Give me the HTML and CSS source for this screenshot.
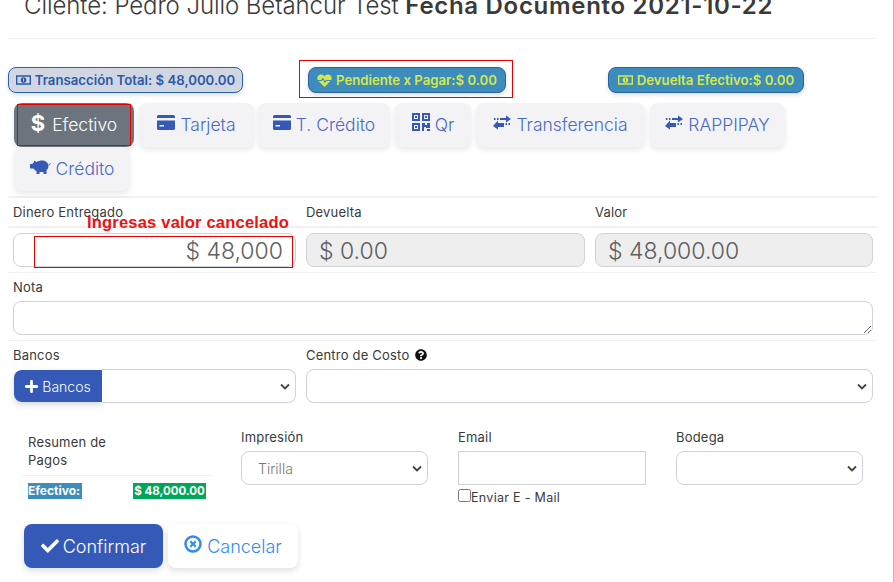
FILE: index.html
```html
<!DOCTYPE html>
<html lang="es">
<head>
<meta charset="utf-8">
<title>Pago</title>
<link rel="stylesheet" href="styles.css">
</head>
<body>
<div class="modal">
  <h4 class="title">Cliente: Pedro Julio Betancur Test <b>Fecha Documento 2021-10-22</b></h4>
  <hr class="rule rule-title">
  <div class="badges">
    <span class="badge badge-light">
      <svg class="ic-money" viewBox="0 0 16 12"><path fill="currentColor" fill-rule="evenodd" d="M0 1h16v10H0zM1.500 2.500v7h13v-7zM8 3a3 3 0 1 1 0 6 3 3 0 0 1 0-6z"/><path fill="#d1d7e2" d="M7.500 4.500h1v3h-1z"/></svg>
      Transacción Total: $ 48,000.00</span>
    <span class="badge badge-blue b2">
      <svg class="ic-heart" viewBox="0 0 16 14"><path fill="currentColor" d="M8 14 1.500 7.500C-.8 5 .3 1 3.800 .6 5.500 .4 7 1.200 8 2.500 9 1.200 10.500 .4 12.200 .6 15.700 1 16.800 5 14.500 7.500z"/><path fill="none" stroke="#3c8dbc" stroke-width="1.100" d="M0 7h5l1.200-2.200L8.500 9l1.300-2H16"/></svg>
      Pendiente x Pagar:$ 0.00</span>
    <span class="badge badge-blue b3">
      <svg class="ic-money" viewBox="0 0 16 12"><path fill="currentColor" fill-rule="evenodd" d="M0 1h16v10H0zM1.500 2.500v7h13v-7zM8 3a3 3 0 1 1 0 6 3 3 0 0 1 0-6z"/><path fill="#3c8dbc" d="M7.500 4.500h1v3h-1z"/></svg>
      Devuelta Efectivo:$ 0.00</span>
  </div>
  <div class="tabs">
    <a class="tab tab-active t1"><span class="dollar">$</span> Efectivo</a>
    <a class="tab t2"><svg class="ic" viewBox="0 0 18 15"><path fill="currentColor" d="M1.500 0h15A1.500 1.500 0 0 1 18 1.500V3H0V1.500A1.500 1.500 0 0 1 1.500 0zM0 5.500h18v8a1.500 1.500 0 0 1-1.500 1.500h-15A1.500 1.500 0 0 1 0 13.500zM2.500 10v1.500H7V10z"/></svg>Tarjeta</a>
    <a class="tab t3"><svg class="ic" viewBox="0 0 18 15"><path fill="currentColor" d="M1.500 0h15A1.500 1.500 0 0 1 18 1.500V3H0V1.500A1.500 1.500 0 0 1 1.500 0zM0 5.500h18v8a1.500 1.500 0 0 1-1.500 1.500h-15A1.500 1.500 0 0 1 0 13.500zM2.500 10v1.500H7V10z"/></svg>T. Crédito</a>
    <a class="tab t4"><svg class="ic ic-qr" viewBox="0 0 18 18"><path fill="currentColor" fill-rule="evenodd" d="M0 0h8v8H0zM2 2v4h4V2zM10 0h8v8h-8zM12 2v4h4V2zM0 10h8v8H0zM2 12v4h4v-4zM3 3h2v2H3zM13 3h2v2h-2zM3 13h2v2H3zM10 10h3v2h2v-2h3v5h-4v-1h-2v4h-2zM15 16h3v2h-3z"/></svg>Qr</a>
    <a class="tab t5"><svg class="ic" viewBox="0 0 18 14"><path fill="currentColor" d="M1 2.500h1.500v2H1zM4 2.500h1.500v2H4zM7 2.500h6V0l5 3.500L13 7V4.500H7zM17 7.500h-1.500v2H17zM14 7.500h-1.500v2H14zM11 7.500H5V5L0 10.500 5 14v-2.500h6z"/></svg>Transferencia</a>
    <a class="tab t6"><svg class="ic" viewBox="0 0 18 14"><path fill="currentColor" d="M1 2.500h1.500v2H1zM4 2.500h1.500v2H4zM7 2.500h6V0l5 3.500L13 7V4.500H7zM17 7.500h-1.500v2H17zM14 7.500h-1.500v2H14zM11 7.500H5V5L0 10.500 5 14v-2.500h6z"/></svg>RAPPIPAY</a>
    <a class="tab t7"><svg class="ic ic-pig" viewBox="0 0 21 15"><path fill="currentColor" d="M4 1.500 6.500 3C8 2 10 1.500 12 1.500c4 0 6.500 2.500 6.500 5.500 0 1.800-.8 3.200-2 4.300V15h-3v-2h-4v2h-3v-3C4.800 11.300 4 10.300 3.500 9.500H0V5h2.300C2.800 4.200 3.500 3.500 4 3.200z"/><path fill="none" stroke="currentColor" stroke-width="1" d="M18.500 6c1 0 1.800-.7 1.800-1.800"/></svg>Crédito</a>
  </div>
  <hr class="rule rule-tabs">
  <div class="grid3 labels">
    <label class="lbl">Dinero Entregado</label>
    <label class="lbl">Devuelta</label>
    <label class="lbl">Valor</label>
  </div>
  <hr class="rule rule-labels">
  <div class="grid3 amounts">
    <input class="field amount" value="$ 48,000">
    <input class="field amount left" value="$ 0.00" disabled>
    <input class="field amount left" value="$ 48,000.00" disabled>
  </div>
  <hr class="rule rule-amounts">
  <div class="nota">
    <label class="lbl">Nota</label>
    <textarea class="field area"></textarea>
  </div>
  <hr class="rule rule-nota">
  <div class="bank-row">
    <div class="bank-col">
      <label class="lbl">Bancos</label>
      <div class="group">
        <a class="bank-btn"><svg class="ic-plus" viewBox="0 0 448 512"><path fill="currentColor" d="M416 208H272V64c0-17.670-14.330-32-32-32h-32c-17.670 0-32 14.330-32 32v144H32c-17.670 0-32 14.330-32 32v32c0 17.670 14.330 32 32 32h144v144c0 17.670 14.330 32 32 32h32c17.670 0 32-14.330 32-32V304h144c17.670 0 32-14.330 32-32v-32c0-17.670-14.330-32-32-32z"/></svg>Bancos</a>
        <select class="field sel sel-group"></select>
      </div>
    </div>
    <div class="cost-col">
      <label class="lbl">Centro de Costo <svg class="ic-q" viewBox="0 0 512 512"><path fill="currentColor" d="M504 256c0 136.997-111.043 248-248 248S8 392.997 8 256C8 119.083 119.043 8 256 8s248 111.083 248 248zM262.655 90c-54.497 0-89.255 22.957-116.549 63.758-3.536 5.286-2.353 12.415 2.715 16.258l34.699 26.310c5.205 3.947 12.621 3.008 16.665-2.122 17.864-22.658 30.113-35.797 57.303-35.797 20.429 0 45.698 13.148 45.698 32.958 0 14.976-12.363 22.667-32.534 33.976C247.128 238.528 216 254.941 216 296v4c0 6.627 5.373 12 12 12h56c6.627 0 12-5.373 12-12v-1.333c0-28.462 83.186-29.647 83.186-106.667 0-58.002-60.165-102-116.531-102zM256 338c-25.365 0-46 20.635-46 46 0 25.364 20.635 46 46 46s46-20.636 46-46c0-25.365-20.635-46-46-46z"/></svg></label>
      <select class="field sel"></select>
    </div>
  </div>
  <div class="bottom-row">
    <div class="summary">
      <div class="sum-head">Resumen de<br>Pagos</div>
      <div class="sum-row"><span class="sum-k">Efectivo:</span><span class="sum-v">$ 48,000.00</span></div>
    </div>
    <div class="col-print">
      <label class="lbl">Impresión</label>
      <select class="field sel sel-print"><option>Tirilla</option></select>
    </div>
    <div class="col-mail">
      <label class="lbl">Email</label>
      <input class="field mail">
      <label class="check"><input type="checkbox" class="chk"><span class="check-text">Enviar E - Mail</span></label>
    </div>
    <div class="col-store">
      <label class="lbl">Bodega</label>
      <select class="field sel"></select>
    </div>
  </div>
  <div class="actions">
    <a class="btn btn-ok"><svg class="ic-check" viewBox="0 0 512 512"><path fill="currentColor" d="M173.898 439.404l-166.400-166.400c-9.997-9.997-9.997-26.206 0-36.204l36.203-36.204c9.997-9.998 26.207-9.998 36.204 0L192 312.690 432.095 72.596c9.997-9.997 26.207-9.997 36.204 0l36.203 36.204c9.997 9.997 9.997 26.206 0 36.204l-294.400 294.401c-9.998 9.997-26.207 9.997-36.204-.001z"/></svg>Confirmar</a>
    <a class="btn btn-cancel"><svg class="ic-x" viewBox="0 0 18 18"><circle cx="9" cy="9" r="7.500" fill="none" stroke="currentColor" stroke-width="2.500"/><path fill="none" stroke="currentColor" stroke-width="2.200" d="M6.300 6.300l5.400 5.400M11.700 6.300l-5.400 5.400"/></svg>Cancelar</a>
  </div>
  <div class="mark mark-1"></div>
  <div class="mark mark-2"></div>
  <div class="mark mark-3"></div>
  <div class="note-red">Ingresas valor cancelado</div>
</div>
</body>
</html>
```
FILE: styles.css
```css
* { box-sizing: border-box; }
html, body { margin: 0; padding: 0; background: #fff; height: 100%; overflow: hidden; }
body { font-family: "Inter", "Noto Sans", sans-serif; color: #3a3a3a; }
.modal { position: relative; width: 894px; height: 582px; overflow: hidden; border-right: 1px solid #b9b9b9; }
.title { margin: -9px 0 0 24px; font-size: 24px; line-height: 30px; font-weight: 300; color: #3a3a3a; white-space: nowrap; letter-spacing: -.08px; }
.title b { font-weight: 600; letter-spacing: .7px; }
.rule { border: 0; height: 1px; background: #f1f1f3; margin: 0 16px 0 8px; }
.rule-title { margin-top: 17px; }
.badges { display: flex; margin: 28px 0 0 8px; height: 26px; }
.badge { display: flex; align-items: center; justify-content: center; gap: 4px; height: 26px; border-radius: 8px; font-size: 13.200px; font-weight: 600; white-space: nowrap; box-shadow: 0 2px 4px rgba(60,70,90,.18); border: 1px solid #2a62a8; }
.badge-light { width: 235px; background: #d1d7e2; color: #2c5aa8; }
.badge-blue { background: #3c8dbc; color: #d4e84a; }
.b2 { width: 198px; margin-left: 65px; }
.b3 { width: 196px; margin-left: 102px; }
.ic-money { width: 15px; height: 12px; }
.ic-heart { width: 15px; height: 13px; }
.tabs { display: flex; flex-wrap: wrap; margin: 10px 0 0 14px; width: 790px; column-gap: 5px; }
.tab { display: flex; align-items: center; justify-content: center; gap: 5px; height: 44px; padding-bottom: 2px; border-radius: 8px; background: #f3f3f5; color: #4a6bc4; font-size: 17.500px; font-weight: 300; white-space: nowrap; box-shadow: 0 3px 5px rgba(60,70,90,.12); }
.tab-active { background: #6c757d; color: #fff; }
.t1 { width: 120px; } .t2 { width: 115px; } .t3 { width: 132px; margin-left: -1px; } .t4 { width: 76px; } .t5 { width: 169px; } .t6 { width: 135px; } .t7 { width: 116px; }
.dollar { font-size: 22px; font-weight: 700; margin-top: -3px; margin-right: 2px; }
.ic { width: 18px; height: 15px; color: #3559b7; margin-top: -4px; }
.ic-qr { height: 18px; }
.ic-pig { width: 21px; }
.rule-tabs { margin-top: 5px; height: 2px; }
.grid3 { display: grid; grid-template-columns: 283px 279px 278px; column-gap: 10px; margin-left: 13px; }
.lbl { display: block; font-size: 13px; font-weight: 400; color: #3a3a3a; line-height: 16px; padding-bottom: 2px; white-space: nowrap; letter-spacing: .2px; }
.labels { margin-top: 5px; height: 23px; padding-top: 1px; }
.rule-labels { height: 2px; margin-top: 0; }
.amounts { margin-top: 5px; }
.field { border: 1px solid #d2d2dc; border-radius: 8px; background: #fff; font-family: inherit; outline: 0; display: block; }
.amount { height: 34px; width: 100%; font-size: 23px; font-weight: 300; color: #5f5f5f; text-align: right; padding: 1px 12px 0; }
.left { text-align: left; background: #eeeeee; }
.rule-amounts { margin-top: 5px; }
.nota { margin: 6px 0 0 13px; width: 860px; display: flex; flex-direction: column; gap: 4px; }
.area { width: 860px; height: 34px; resize: vertical; }
.rule-nota { margin-top: 5px; }
.bank-row { display: flex; margin: 6px 0 0 13px; gap: 10px; }
.bank-col { width: 283px; display: flex; flex-direction: column; gap: 4px; }
.cost-col { width: 567px; display: flex; flex-direction: column; gap: 4px; }
.ic-q { width: 12px; height: 12px; vertical-align: -1px; color: #111; margin-left: 2px; }
.group { display: flex; height: 34px; padding-left: 1px; }
.bank-btn { display: flex; align-items: center; justify-content: center; gap: 4px; width: 88px; height: 32px; margin-top: 1px; background: #3559b7; color: #fff; border-radius: 8px 0 0 8px; font-size: 14px; font-weight: 300; box-shadow: 0 3px 6px rgba(60,70,90,.2); }
.ic-plus { width: 13px; height: 15px; }
.sel { appearance: none; -webkit-appearance: none; height: 34px; width: 100%; font-size: 14px; font-weight: 300; color: #777; padding: 0 16px; background: #fff url("data:image/svg+xml,%3Csvg xmlns='http://www.w3.org/2000/svg' viewBox='0 0 10 7'%3E%3Cpath fill='none' stroke='%23444' stroke-width='1.800' d='M1 1.500l4 4 4-4'/%3E%3C/svg%3E") no-repeat right 5px center / 10px 7px; }
.sel-group { flex: 1; width: auto; border-radius: 0 8px 8px 0; border-left: 0; }
.bottom-row { display: flex; margin: 25px 0 0 0; height: 96px; }
.summary { width: 178px; margin-left: 28px; font-size: 13px; letter-spacing: .2px; padding-top: 5px; flex: none; }
.sum-head { line-height: 18px; height: 43px; border-bottom: 1px solid #f1f1f3; width: 188px; margin-left: -5px; padding-left: 5px; }
.sum-row { display: flex; justify-content: space-between; margin-top: 7px; font-size: 12px; letter-spacing: 0; font-weight: 700; color: #fff; line-height: 16px; height: 16px; }
.sum-k { background: #3c8dbc; width: 54px; overflow: hidden; white-space: nowrap; }
.sum-v { background: #00a65a; width: 73px; text-align: center; white-space: nowrap; font-size: 11.500px; }
.col-print { width: 187px; margin-left: 35px; padding-top: 1px; display: flex; flex-direction: column; gap: 4px; flex: none; }
.col-mail { width: 188px; margin-left: 30px; padding-top: 1px; display: flex; flex-direction: column; gap: 4px; flex: none; }
.mail { height: 34px; width: 188px; border-radius: 0; }
.col-store { width: 187px; margin-left: 30px; padding-top: 1px; display: flex; flex-direction: column; gap: 4px; flex: none; }
.check { display: flex; align-items: flex-start; font-size: 12.500px; letter-spacing: .3px; margin-top: 0; }
.check-text { line-height: 16px; margin-top: 1px; }
.chk { margin: 0; width: 13px; height: 13px; }
.actions { display: flex; gap: 5px; margin: 0 0 0 24px; }
.btn { display: flex; align-items: center; justify-content: center; height: 44px; border-radius: 8px; font-size: 18px; font-weight: 300; box-shadow: 0 3px 6px rgba(60,70,90,.16); gap: 4px; }
.btn-ok { width: 139px; background: #3559b7; color: #fff; }
.btn-cancel { width: 130px; background: #fff; color: #2f8df0; gap: 5px; }
.ic-check { width: 18px; height: 18px; }
.ic-x { width: 18px; height: 18px; margin-top: -4px; }
.mark { position: absolute; border: 1px solid #e60000; }
.mark-1 { left: 299px; top: 60px; width: 214px; height: 38px; }
.mark-2 { left: 17px; top: 104px; width: 114px; height: 42px; }
.mark-3 { left: 34px; top: 236px; width: 259px; height: 32px; }
.note-red { position: absolute; left: 87px; top: 213px; font-family: "Liberation Sans", sans-serif; font-size: 16.500px; font-weight: 700; color: #f01010; white-space: nowrap; line-height: 18px; letter-spacing: .2px; }
```
